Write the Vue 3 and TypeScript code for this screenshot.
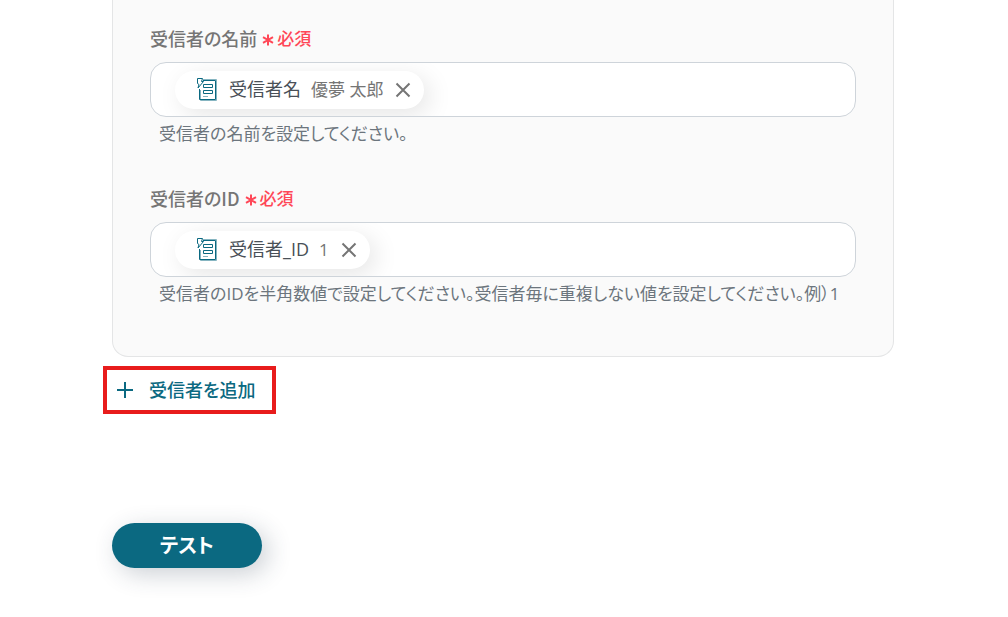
<script setup lang="ts">
import { ref } from 'vue'

interface Field {
  id: string
  label: string
  token: string
  sample: string
  hint: string
  text: string
}

const fields = ref<Field[]>([
  {
    id: 'recipient-name',
    label: '受信者の名前',
    token: '受信者名',
    sample: '優夢 太郎',
    hint: '受信者の名前を設定してください。',
    text: '',
  },
  {
    id: 'recipient-id',
    label: '受信者のID',
    token: '受信者_ID',
    sample: '1',
    hint: '受信者のIDを半角数値で設定してください。受信者毎に重複しない値を設定してください。例）1',
    text: '',
  },
])
</script>

<template>
  <main class="page">
    <section class="panel">
      <div v-for="field in fields" :key="field.id" class="field">
        <label class="label" :for="field.id">
          <span>{{ field.label }}</span>
          <span class="required">
            <svg class="asterisk" viewBox="0 0 12 12" aria-hidden="true">
              <path d="M6 0.5V11.5M1 3.2L11 8.8M11 3.2L1 8.8" />
            </svg>
            必須
          </span>
        </label>
        <div class="box">
          <span class="chip">
            <svg class="doc" viewBox="0 0 22 24" aria-hidden="true">
              <path class="soft" d="M7 1.5H20.5V22.5H4.5V12" />
              <path d="M7 2.5H19.5V21.5H3.5V11" />
              <path d="M1.5 0.5H6.5L5.5 3.5H7.5L2 10L3 6.5L1.5 5.5Z" />
              <path d="M7.5 6.5H16.5V9.5H7.5ZM7.5 12.5H16.5V15.5H7.5Z" />
              <path class="soft" d="M7 18.5H12" />
            </svg>
            <span class="token">{{ field.token }}</span>
            <span class="sample">{{ field.sample }}</span>
            <button class="remove" type="button" :aria-label="field.token">
              <svg viewBox="0 0 16 16" aria-hidden="true">
                <path d="M1.5 1.5L14.5 14.5M14.5 1.5L1.5 14.5" />
              </svg>
            </button>
          </span>
          <input :id="field.id" v-model="field.text" class="entry" type="text" />
        </div>
        <p class="hint">{{ field.hint }}</p>
      </div>
    </section>

    <div class="highlight">
      <button class="add" type="button">
        <svg viewBox="0 0 16 16" aria-hidden="true">
          <path d="M8 0V16M0 8H16" />
        </svg>
        受信者を追加
      </button>
    </div>

    <button class="test" type="button">テスト</button>
  </main>
</template>

<style>
body {
  margin: 0;
  background: #fff;
}
</style>

<style scoped>
.page {
  padding: 0 114px 48px 112px;
  color: #757575;
  font-family: "Open Sans", "Noto Sans CJK JP", sans-serif;
  font-feature-settings: "palt";
}

button,
input {
  margin: 0;
  padding: 0;
  border: 0;
  background: none;
  font: inherit;
  font-feature-settings: inherit;
}

button {
  cursor: pointer;
}

svg {
  display: block;
  flex: none;
  fill: none;
  stroke: currentColor;
}

.panel {
  display: flex;
  flex-direction: column;
  gap: 37px;
  padding: 24px 37px 49px;
  border: 1px solid #e4e5e6;
  border-top: 0;
  border-radius: 0 0 16px 16px;
  background: #fafafa;
}

.label {
  display: flex;
  align-items: center;
  gap: 5px;
  margin-bottom: 10px;
  font-family: "Noto Sans CJK JP", sans-serif;
  font-size: 18px;
  font-weight: 500;
  line-height: 28px;
}

.required {
  display: flex;
  align-items: center;
  gap: 3px;
  color: #ff4757;
  font-size: 17px;
}

.asterisk {
  width: 12px;
  height: 12px;
  margin-top: 4px;
  stroke-width: 2;
}

.box {
  display: flex;
  align-items: center;
  box-sizing: border-box;
  height: 55px;
  padding: 0 24px;
  overflow: hidden;
  border: 1px solid #ced4da;
  border-radius: 16px;
  background: #fff;
}

.chip {
  display: flex;
  flex: none;
  align-items: center;
  height: 38px;
  padding: 0 13px 0 21px;
  border-radius: 19px;
  background: #fff;
  box-shadow: 6px 6px 24px rgba(0, 0, 0, 0.1);
  line-height: 26px;
  white-space: nowrap;
}

.doc {
  width: 22px;
  height: 24px;
  margin-right: 11px;
  color: #0b6981;
}

.doc .soft {
  stroke: #86b5c1;
}

.token {
  margin-right: 10px;
  padding-bottom: 2px;
  color: #495057;
  font-size: 18px;
}

.sample {
  margin-right: 12px;
  font-size: 17px;
}

.remove svg {
  width: 16px;
  height: 16px;
  color: #757575;
  stroke-width: 2;
}

.entry {
  flex: 1;
  min-width: 0;
  outline: 0;
  font-size: 18px;
}

.hint {
  margin: 4px 0 0;
  padding-left: 9px;
  color: #6c757d;
  font-size: 17px;
  line-height: 26px;
}

.highlight {
  width: fit-content;
  margin: 9px 0 0 -9px;
  padding: 5px 16px 5px 10px;
  border: 4px solid #e81c1c;
}

.add {
  display: flex;
  align-items: center;
  gap: 16px;
  color: #0b6981;
  font-size: 18px;
  font-weight: 500;
  line-height: 30px;
}

.add svg {
  width: 16px;
  height: 16px;
  stroke-width: 2;
}

.test {
  display: block;
  min-width: 150px;
  height: 45px;
  margin-top: 109px;
  padding-bottom: 2px;
  border-radius: 23px;
  background: #0b6981;
  box-shadow: 6px 6px 24px rgba(40, 60, 80, 0.24);
  color: #fff;
  font-size: 20px;
  font-weight: 700;
}
</style>
